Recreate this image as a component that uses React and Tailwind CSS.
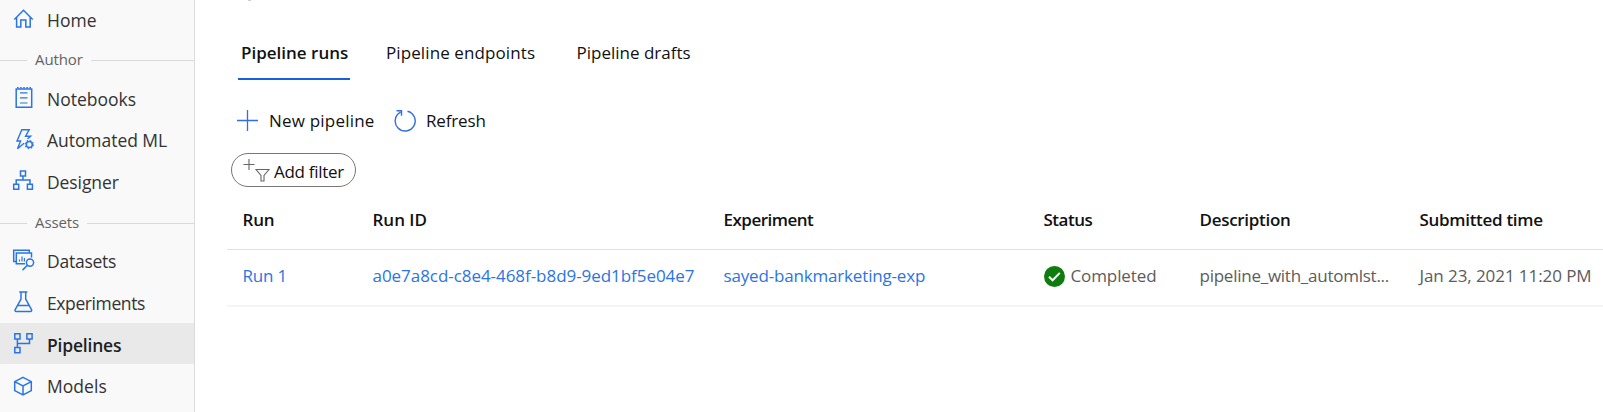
import React from 'react';

function Icon({ children }) {
  return (
    <svg
      className="mt-[9px] h-6 w-6 shrink-0 overflow-visible text-[#2b74e4]"
      viewBox="0 0 24 24"
      fill="none"
      stroke="currentColor"
      strokeWidth="1.5"
    >
      {children}
    </svg>
  );
}

const icons = {
  home: (
    <Icon>
      <path d="M3.3 11.5 12.5 2.3 21.7 11.5M5.6 9.5V19h4.2v-7h5v7h4.4V9.500" />
    </Icon>
  ),
  notebooks: (
    <Icon>
      <path d="M5.2 2h15.5v18.2H5.2z" />
      <path d="M6 .8h14" strokeDasharray="1.6 1.5" />
      <path d="M9 5.8h7.5M9 10.8h7.5M9 16h7.5" strokeWidth="1.2" />
    </Icon>
  ),
  automl: (
    <Icon>
      <path d="M13 14.2 6.5 19.7 9.6 12H6L10.8.7h7.4l-3.6 6.5h5L16.5 10" strokeWidth="1.4" />
      <circle cx="18.3" cy="15.5" r="3" />
      <circle cx="18.3" cy="15.5" r="4.1" strokeWidth="1.1" strokeDasharray="1.4 1.82" />
    </Icon>
  ),
  designer: (
    <Icon>
      <path d="M9.5 0h5v5h-5zM2.7 13.2h5v5h-5zM16.4 13.2h5v5h-5zM12 5v4M5.2 13.2V9H19v4.2" />
    </Icon>
  ),
  datasets: (
    <Icon>
      <path d="M5 12.6H2.7V1.3h15.6v2.5" />
      <path d="M14 14.8H5.3V4h15.2v4.5" />
      <path d="M8.5 12.5v-2M11 12.5v-5M13.4 12.5v-3.5" strokeWidth="1.2" />
      <circle cx="19" cy="13.6" r="3.6" />
      <path d="m16.4 16.2-4.9 4.9" />
    </Icon>
  ),
  experiments: (
    <Icon>
      <path d="M8.2 1h8.2M10 1v7L4.2 18.6c-.5 1 0 2 1 2h14.3c1 0 1.5-1 1-2L14.7 8V1M6.6 14.6h11.6" />
    </Icon>
  ),
  pipelines: (
    <Icon>
      <path d="M3.8 1.7H9v5.2H3.8zM15.9 1.7h5.2v5.2h-5.2zM3.8 15.6H9v5.2H3.8zM6.4 6.9v8.7M18.5 6.9v4.6H6.4" />
    </Icon>
  ),
  models: (
    <Icon>
      <path d="m12 4.3 8.3 4.3v9L12 22l-8.3-4.4v-9zM3.7 8.6 12 12.9l8.300-4.300M12 12.900V22" />
    </Icon>
  ),
};

function NavItem({ icon, active, height, children, text }) {
  return (
    <a className={`flex items-start pl-[11px] ${height} ${active ? 'bg-[#e9e9e9] font-semibold text-[#1f1f1f]' : 'text-[#333]'}`}>
      {icons[icon]}
      <span className={`ml-3 text-[17.5px] whitespace-nowrap ${text}`}>{children}</span>
    </a>
  );
}

function Section({ children, height }) {
  return (
    <div className={`flex items-center text-[15px] text-[#636363] ${height}`}>
      <span className="mt-[3px] h-px w-[27px] bg-[#dadada]" />
      <span className="mx-[8px] leading-5 tracking-[-0.1px]">{children}</span>
      <span className="mt-[3px] h-px flex-1 bg-[#dadada]" />
    </div>
  );
}

const columns = 'grid grid-cols-[130px_351px_320px_156px_220px_1fr] items-center pl-[15.5px] whitespace-nowrap text-[17px]';

export default function App() {
  return (
    <div className="flex h-[412px] w-full overflow-hidden bg-white font-['Open_Sans','Noto_Sans',sans-serif] text-[#111]">
      <nav className="w-[195px] shrink-0 border-r border-[#dcdcdc] bg-[#f9f9f9]">
        <div className="-mt-px">
          <NavItem icon="home" height="h-[41px]" text="leading-[43px] tracking-[0.05px]">Home</NavItem>
        </div>
        <Section height="h-[38px]">Author</Section>
        <NavItem icon="notebooks" height="h-[42px]" text="leading-[42px]">Notebooks</NavItem>
        <NavItem icon="automl" height="h-[42px]" text="leading-[41px] tracking-[-0.05px]">Automated ML</NavItem>
        <NavItem icon="designer" height="h-[41px]" text="leading-[41px] tracking-[-0.1px]">Designer</NavItem>
        <Section height="h-[37px]">Assets</Section>
        <NavItem icon="datasets" height="h-[42px]" text="leading-[43px] tracking-[-0.25px]">Datasets</NavItem>
        <NavItem icon="experiments" height="h-[41px]" text="leading-[43px] tracking-[-0.4px]">Experiments</NavItem>
        <NavItem icon="pipelines" height="h-[41px]" text="leading-[44px] tracking-[-0.2px]" active>Pipelines</NavItem>
        <NavItem icon="models" height="h-[42px]" text="leading-[45px] tracking-[0.05px]">Models</NavItem>
      </nav>

      <main className="flex min-w-0 flex-1 flex-col pl-8">
        <div className="ml-[21px] h-px w-[3px] bg-[#cfcfcf]" />
        <div className="mt-[31px] ml-[11px] flex text-[17px] leading-[42px] whitespace-nowrap">
          <div className="h-12 w-[112px] border-b-[2px] border-[#1560e0] pl-[3px] font-semibold">Pipeline runs</div>
          <div className="ml-[36px] w-[190.5px] tracking-[0.1px]">Pipeline endpoints</div>
          <div>Pipeline drafts</div>
        </div>

        <div className="mt-5 ml-[10px] flex h-[41px] items-center text-[17px] whitespace-nowrap">
          <svg className="h-[22px] w-[22px]" viewBox="0 0 22 22" fill="none" stroke="#2f6fe0" strokeWidth="1.3">
            <path d="M10.5 0v21M0 10.5h21" />
          </svg>
          <span className="mt-px ml-[10px] w-[125px] tracking-[0.2px]">New pipeline</span>
          <svg className="h-[22px] w-[22px]" viewBox="0 0 22 22" fill="none" stroke="#2f6fe0" strokeWidth="1.4">
            <path d="M13.5 1.300a10 10 0 1 1-7 .900M2.500.800h5v5" />
          </svg>
          <span className="mt-px ml-[10px] tracking-[-0.15px]">Refresh</span>
        </div>

        <button className="mt-[12px] ml-1 flex h-[34px] w-[125px] items-center rounded-full border border-[#777] pl-[11px] text-[17px] whitespace-nowrap">
          <svg className="h-[26px] w-[28px]" viewBox="0 0 28 26" fill="none" stroke="#666" strokeWidth="1.1">
            <path d="M6 2v11M.5 7.500h11M13 12.500h13l-5 6v5.500h-3V18.500z" />
          </svg>
          <span className="mt-[3px] ml-[3px] tracking-[-0.3px]">Add filter</span>
        </button>

        <div className={`${columns} mt-[3px] h-[60px] border-b border-[#e2e2e2] pt-[1px] font-semibold`}>
          <span className="tracking-[-0.2px]">Run</span>
          <span>Run ID</span>
          <span className="tracking-[-0.5px]">Experiment</span>
          <span className="tracking-[-0.5px]">Status</span>
          <span className="tracking-[-0.3px]">Description</span>
          <span className="tracking-[-0.3px]">Submitted time</span>
        </div>
        <div className={`${columns} h-[57px] border-b-2 border-[#f5f5f5] pb-[3px] text-[#5c5c5c]`}>
          <a className="tracking-[-0.2px] text-[#2b74e4]">Run 1</a>
          <a className="tracking-[-0.05px] text-[#2b74e4]">a0e7a8cd-c8e4-468f-b8d9-9ed1bf5e04e7</a>
          <a className="tracking-[-0.17px] text-[#2b74e4]">sayed-bankmarketing-exp</a>
          <span className="flex items-center">
            <svg className="h-[21px] w-[21px]" viewBox="0 0 21 21" fill="none">
              <circle cx="10.5" cy="10.5" r="10.5" fill="#107c10" />
              <path d="m5 10.7 3.600 3.600 7.200-7.400" stroke="#fff" strokeWidth="2" />
            </svg>
            <span className="ml-[6px] tracking-[-0.1px]">Completed</span>
          </span>
          <span className="tracking-[-0.25px]">pipeline_with_automlst...</span>
          <span className="tracking-[-0.08px]">Jan 23, 2021 11:20 PM</span>
        </div>
      </main>
    </div>
  );
}
